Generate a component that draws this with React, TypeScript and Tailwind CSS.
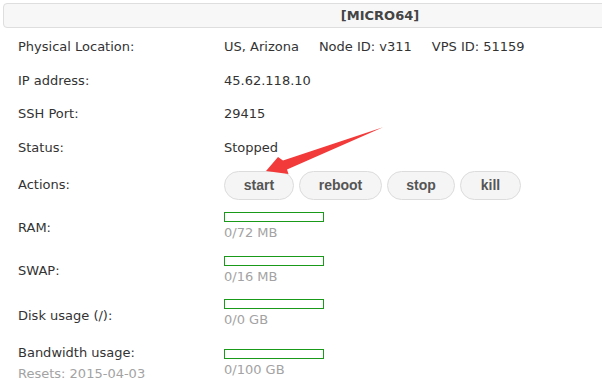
import React from "react";

const labelFont = { fontFamily: '"DejaVu Sans", Verdana, sans-serif' };

function TextRow({ label, h, children }: { label: string; h: string; children: React.ReactNode }) {
  return (
    <div className={`flex items-center ${h}`}>
      <div className="w-[206px] shrink-0">{label}</div>
      <div className="flex gap-[20px]">{children}</div>
    </div>
  );
}

function Bar({ used }: { used: string }) {
  return (
    <div className="pt-[6px]">
      <div className="w-[100px] h-[10px] border border-[#199a19] bg-white" />
      <div className="mt-[3px] leading-[16px] text-[#a3a3a3]">{used}</div>
    </div>
  );
}

export default function App() {
  const buttons = [
    { name: "start", w: "w-[70px]" },
    { name: "reboot", w: "w-[83px]" },
    { name: "stop", w: "w-[68px]" },
    { name: "kill", w: "w-[61px]" },
  ];

  return (
    <div
      className="relative w-[602px] h-[380px] overflow-hidden bg-white text-[13px] leading-[16px] text-[#333]"
      style={labelFont}
    >
      {/* Header */}
      <div className="ml-[3px] mt-[3px] mb-[2px] w-[754px] h-[25px] rounded-l-[4px] border border-[#dedede] bg-[#f7f7f7] flex items-center justify-center">
        <span className="font-bold text-[13px] text-[#444]">[MICRO64]</span>
      </div>

      <div className="pl-[18px]">
        <TextRow label="Physical Location:" h="h-[34px]">
          <span>US, Arizona</span>
          <span>Node ID: v311</span>
          <span>VPS ID: 51159</span>
        </TextRow>
        <TextRow label="IP address:" h="h-[33px]">
          <span>45.62.118.10</span>
        </TextRow>
        <TextRow label="SSH Port:" h="h-[34px]">
          <span>29415</span>
        </TextRow>
        <TextRow label="Status:" h="h-[33px]">
          <span>Stopped</span>
        </TextRow>

        {/* Actions */}
        <div className="flex items-center h-[42px]">
          <div className="w-[206px] shrink-0">Actions:</div>
          <div className="flex gap-[5px]">
            {buttons.map((b) => (
              <button
                key={b.name}
                className={`${b.w} h-[29px] rounded-full border border-[#dcdcdc] bg-[#f5f5f5] text-[14px] font-bold text-[#555]`}
                style={{ fontFamily: '"Liberation Sans", Arial, sans-serif' }}
              >
                {b.name}
              </button>
            ))}
          </div>
        </div>

        {/* Usage rows */}
        <div className="flex items-start h-[44px]">
          <div className="w-[206px] shrink-0 pt-[14px]">RAM:</div>
          <Bar used="0/72 MB" />
        </div>
        <div className="flex items-start h-[43px]">
          <div className="w-[206px] shrink-0 pt-[13px]">SWAP:</div>
          <Bar used="0/16 MB" />
        </div>
        <div className="flex items-start h-[50px]">
          <div className="w-[206px] shrink-0 pt-[15px]">Disk usage (/):</div>
          <Bar used="0/0 GB" />
        </div>
        <div className="flex items-start">
          <div className="w-[206px] shrink-0 pt-[2px]">
            <div>Bandwidth usage:</div>
            <div className="mt-[5px] text-[#a3a3a3]">Resets: 2015-04-03</div>
          </div>
          <Bar used="0/100 GB" />
        </div>
      </div>

      {/* Annotation arrow */}
      <svg className="absolute left-0 top-0 pointer-events-none" width="602" height="380" viewBox="0 0 602 380">
        <polygon
          points="266,171 278,157 283,160.5 383,127.3 287,169.5 288.5,174"
          fill="#f23a3a"
        />
      </svg>
    </div>
  );
}
